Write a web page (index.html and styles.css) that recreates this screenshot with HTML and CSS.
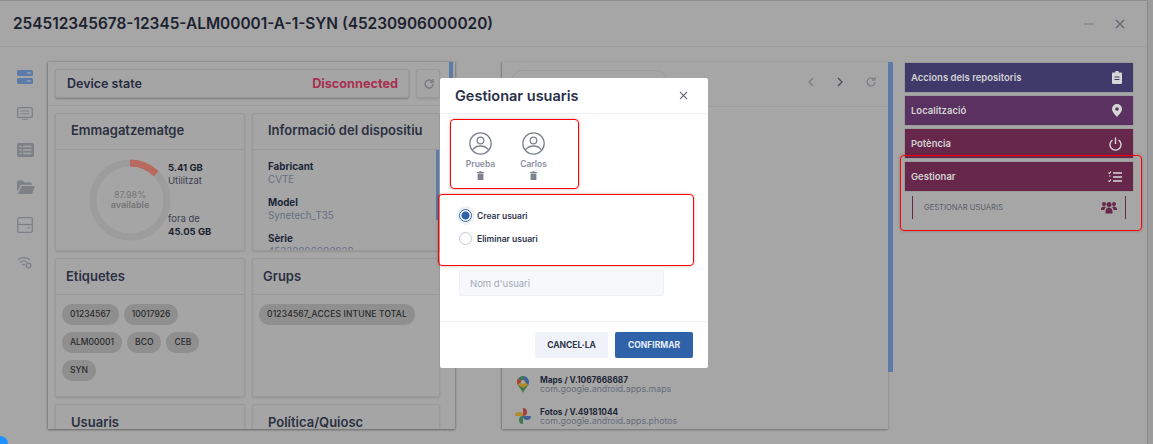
FILE: index.html
```html
<!DOCTYPE html>
<html lang="en">
<head>
    <meta charset="UTF-8">
    <title>Gestionar usuaris</title>
    <link rel="stylesheet" href="styles.css">
</head>
<body>
<div class="window">
    <header class="topbar">
        <h1>254512345678-12345-ALM00001-A-1-SYN (45230906000020)</h1>
        <div class="win-actions">
            <svg width="12" height="12" viewBox="0 0 12 12"><path d="M1 6h10" stroke="#7b7f8a" stroke-width="1.2"/></svg>
            <svg width="12" height="12" viewBox="0 0 12 12"><path d="M2 2l8 8M10 2l-8 8" stroke="#5f6470" stroke-width="1.2"/></svg>
        </div>
    </header>

    <div class="content">
        <aside class="sidebar">
            <svg width="16" height="14" viewBox="0 0 16 14"><rect width="16" height="6" rx="1.500" fill="#5b7ba8"/><rect y="8" width="16" height="6" rx="1.500" fill="#5b7ba8"/><path d="M10 3h4M10 11h4" stroke="#a9b6c8" stroke-width="1"/></svg>
            <svg width="16" height="13" viewBox="0 0 16 13"><rect x=".7" y=".7" width="14.600" height="9.600" rx="1.200" fill="none" stroke="#7d8087" stroke-width="1.300"/><path d="M3.500 4h9M3.500 6.800h9M5 12.300h6" stroke="#7d8087" stroke-width="1.100"/></svg>
            <svg width="17" height="14" viewBox="0 0 17 14"><rect width="17" height="14" rx="2" fill="#7d8087"/><path d="M2.500 3.500h2M6 3.500h8.500M2.500 7h2M6 7h8.500M2.500 10.500h2M6 10.500h8.500" stroke="#a6a6a6" stroke-width="1.400"/></svg>
            <svg width="18" height="14" viewBox="0 0 18 14"><path d="M0 2a1.500 1.500 0 0 1 1.500-1.500h4l2 2h6a1.500 1.500 0 0 1 1.500 1.500v.8H4L0 11.500z" fill="#7d8087"/><path d="M4.500 6H18l-3 8H1z" fill="#7d8087"/></svg>
            <svg width="16" height="16" viewBox="0 0 16 16"><rect x=".7" y=".7" width="14.600" height="14.600" rx="1.500" fill="none" stroke="#7d8087" stroke-width="1.300"/><path d="M1 7.500h14" stroke="#7d8087" stroke-width="1.300"/><path d="M10 11h3" stroke="#7d8087"/></svg>
            <svg width="15" height="13" viewBox="0 0 15 13"><path d="M1 4a9 9 0 0 1 12 0M3 6.500a6 6 0 0 1 7-.5M5 9a3 3 0 0 1 3-.5" fill="none" stroke="#7d8087" stroke-width="1.200"/><circle cx="11.500" cy="9.500" r="2.300" fill="none" stroke="#7d8087" stroke-width="1.300"/></svg>
        </aside>

        <section class="panel-left">
            <div class="panel-main">
                <div class="state-row">
                    <div class="card state-card">
                        <span class="state-title">Device state</span>
                        <span class="state-value">Disconnected</span>
                    </div>
                    <div class="card refresh-card">
                        <svg width="12" height="12" viewBox="0 0 24 24"><path d="M20 12a8 8 0 1 1-2.500-5.800M20 2v6h-6" fill="none" stroke="#74777e" stroke-width="2.500"/></svg>
                    </div>
                </div>
                <div class="card-grid">
                    <div class="card info-card">
                        <h3 class="card-head indented">Emmagatzematge</h3>
                        <div class="storage">
                            <div class="donut">
                                <svg width="82" height="82" viewBox="0 0 82 82">
                                    <circle cx="41" cy="41" r="37" fill="none" stroke="#9c9c9c" stroke-width="7"/>
                                    <path d="M41 4A37 37 0 0 1 67.200 14.800" fill="none" stroke="#b86a60" stroke-width="7"/>
                                </svg>
                                <div class="donut-label"><span>87.98%</span><b>available</b></div>
                            </div>
                            <div class="storage-text">
                                <div><b>5.41 GB</b><br>Utilitzat</div>
                                <div>fora de<br><b>45.05 GB</b></div>
                            </div>
                        </div>
                    </div>
                    <div class="card info-card">
                        <h3 class="card-head indented">Informació del dispositiu</h3>
                        <dl class="device-info">
                            <dt>Fabricant</dt><dd>CVTE</dd>
                            <dt>Model</dt><dd>Synetech_T35</dd>
                            <dt>Sèrie</dt><dd>45230906000020</dd>
                        </dl>
                        <div class="card-thumb"></div>
                    </div>
                    <div class="card tag-card">
                        <h3 class="card-head">Etiquetes</h3>
                        <div class="chips">
                            <span class="chip">01234567</span>
                            <span class="chip">10017926</span>
                            <span class="chip">ALM00001</span>
                            <span class="chip">BCO</span>
                            <span class="chip">CEB</span>
                            <span class="chip">SYN</span>
                        </div>
                    </div>
                    <div class="card tag-card">
                        <h3 class="card-head">Grups</h3>
                        <div class="chips">
                            <span class="chip chip-long">01234567_ACCES INTUNE TOTAL</span>
                        </div>
                    </div>
                    <div class="card last-card"><h3 class="card-head indented">Usuaris</h3></div>
                    <div class="card last-card"><h3 class="card-head indented">Política/Quiosc</h3></div>
                </div>
            </div>
            <div class="scroll-thumb"></div>
        </section>

        <div class="apps-rail">
            <svg width="11" height="9" viewBox="0 0 11 9" fill="#5b6478"><rect width="3" height="2.500"/><rect x="4" width="3" height="2.500"/><rect x="8" width="3" height="2.500"/><rect y="3.500" width="3" height="2.500"/><rect x="4" y="3.500" width="3" height="2.500"/><rect x="8" y="3.500" width="3" height="2.500"/><rect y="7" width="3" height="2"/><rect x="4" y="7" width="3" height="2"/><rect x="8" y="7" width="3" height="2"/></svg>
        </div>

        <section class="panel-apps">
            <div class="apps-bar">
                <div class="apps-search"></div>
                <div class="apps-nav">
                    <svg width="8" height="10" viewBox="0 0 8 10"><path d="M6 1L2 5l4 4" fill="none" stroke="#797c83" stroke-width="1.200"/></svg>
                    <svg width="8" height="10" viewBox="0 0 8 10"><path d="M2 1l4 4-4 4" fill="none" stroke="#4c505a" stroke-width="1.300"/></svg>
                    <svg width="12" height="12" viewBox="0 0 24 24"><path d="M20 12a8 8 0 1 1-2.500-5.800M20 2v6h-6" fill="none" stroke="#74777e" stroke-width="2.200"/></svg>
                </div>
            </div>
            <ul class="app-list">
                <li>
                    <svg class="app-icon" width="12" height="17" viewBox="0 0 12 17">
                        <path d="M6 0a6 6 0 0 1 6 6c0 1-.3 2-.8 2.900L6 5z" fill="#3f6293"/>
                        <path d="M6 0A6 6 0 0 0 1.300 2.200L6 6z" fill="#3c7a4b"/>
                        <path d="M1.300 2.200A6 6 0 0 0 .8 8.900L6 6z" fill="#a4413a"/>
                        <path d="M.8 8.900c1.400 2.800 4.200 4.600 5.200 8.100 1-3.500 3.800-5.300 5.200-8.100L6 6z" fill="#3c7a4b"/>
                        <path d="M.8 8.900L6 3.800l5.200 5.100L6 12z" fill="#b08a2c"/>
                        <circle cx="6" cy="6" r="2" fill="#a6a6a6"/>
                    </svg>
                    <div><b>Maps / V.1067668687</b><span>com.google.android.apps.maps</span></div>
                </li>
                <li>
                    <svg class="app-icon" width="16" height="16" viewBox="0 0 16 16">
                        <path d="M0 8h8a4 4 0 0 0-8 0z" fill="#b08a2c"/>
                        <path d="M0 8h8a4 4 0 0 0-8 0z" fill="#a4413a" transform="rotate(90 8 8)"/>
                        <path d="M0 8h8a4 4 0 0 0-8 0z" fill="#3f6293" transform="rotate(180 8 8)"/>
                        <path d="M0 8h8a4 4 0 0 0-8 0z" fill="#3c7a4b" transform="rotate(270 8 8)"/>
                    </svg>
                    <div><b>Fotos / V.49181044</b><span>com.google.android.apps.photos</span></div>
                </li>
            </ul>
        </section>
        <div class="apps-thumb"></div>

        <aside class="actions">
            <div class="action a-blue">Accions dels repositoris
                <svg width="10" height="13" viewBox="0 0 10 13"><path d="M1 1.500h2.200a1.800 1.800 0 0 1 3.600 0H9a1 1 0 0 1 1 1V12a1 1 0 0 1-1 1H1a1 1 0 0 1-1-1V2.500a1 1 0 0 1 1-1z" fill="#d6d6d6"/><path d="M2.500 6h5M2.500 8.500h5" stroke="#3f3a6a" stroke-width="1"/></svg>
            </div>
            <div class="action a-purple">Localització
                <svg width="10" height="13" viewBox="0 0 10 13"><path d="M5 0a5 5 0 0 1 5 5c0 3-3.500 6-5 8-1.500-2-5-5-5-8a5 5 0 0 1 5-5z" fill="#d6d6d6"/><circle cx="5" cy="5" r="1.800" fill="#5a3160"/></svg>
            </div>
            <div class="action a-wine">Potència
                <svg width="13" height="14" viewBox="0 0 13 14"><path d="M3.500 3a5.500 5.500 0 1 0 6 0M6.500 .5V7" fill="none" stroke="#d6d6d6" stroke-width="1.400"/></svg>
            </div>
            <div class="action a-wine">Gestionar
                <svg width="14" height="12" viewBox="0 0 14 12"><path d="M5 2h9M5 6h9M5 10h9" stroke="#d6d6d6" stroke-width="1.500"/><path d="M.5 1.500l1 1L3 .5M.5 9.500l1 1L3 8.500M1 5h1.500" fill="none" stroke="#d6d6d6" stroke-width="1.100"/></svg>
            </div>
            <div class="sub-action">GESTIONAR USUARIS
                <svg width="16" height="13" viewBox="0 0 16 13" fill="#66274b"><circle cx="3" cy="3" r="2"/><circle cx="13" cy="3" r="2"/><circle cx="8" cy="3.500" r="2.500"/><path d="M0 9a3 3 0 0 1 3-3.500c1 0 1.500.3 2 .8C4 7 3.500 8 3.500 9zM16 9a3 3 0 0 0-3-3.500c-1 0-1.500.3-2 .8 1 .7 1.500 1.700 1.500 2.700zM4.500 11c0-3 1.500-4.500 3.500-4.500s3.500 1.500 3.500 4.500v1.500h-7z"/></svg>
            </div>
        </aside>
    </div>
</div>

<div class="blue-dot"></div>

<div class="overlay">
    <div class="modal">
        <div class="modal-head">
            <h2>Gestionar usuaris</h2>
            <svg width="9" height="9" viewBox="0 0 9 9"><path d="M1 1l7 7M8 1L1 8" stroke="#6a6f7c" stroke-width="1.100"/></svg>
        </div>
        <div class="modal-body">
            <div class="users">
                <div class="user">
                    <svg width="23" height="23" viewBox="0 0 23 23"><circle cx="11.500" cy="11.500" r="10.700" fill="none" stroke="#7d8290" stroke-width="1.300"/><circle cx="11.500" cy="8.500" r="3.300" fill="none" stroke="#7d8290" stroke-width="1.300"/><path d="M3.500 18c2-3 5-4 8-4s6 1 8 4" fill="none" stroke="#7d8290" stroke-width="1.300"/></svg>
                    <b>Prueba</b>
                    <svg width="7" height="9" viewBox="0 0 7 9" fill="#7d8290"><path d="M0 1h2.300V.3h2.400V1H7v1H0zM.6 2.600h5.800V9H.6z"/></svg>
                </div>
                <div class="user">
                    <svg width="23" height="23" viewBox="0 0 23 23"><circle cx="11.500" cy="11.500" r="10.700" fill="none" stroke="#7d8290" stroke-width="1.300"/><circle cx="11.500" cy="8.500" r="3.300" fill="none" stroke="#7d8290" stroke-width="1.300"/><path d="M3.500 18c2-3 5-4 8-4s6 1 8 4" fill="none" stroke="#7d8290" stroke-width="1.300"/></svg>
                    <b>Carlos</b>
                    <svg width="7" height="9" viewBox="0 0 7 9" fill="#7d8290"><path d="M0 1h2.300V.3h2.400V1H7v1H0zM.6 2.600h5.800V9H.6z"/></svg>
                </div>
            </div>
            <div class="radios">
                <label class="radio checked"><span class="dot"></span>Crear usuari</label>
                <label class="radio"><span class="dot"></span>Eliminar usuari</label>
            </div>
            <input class="name-input" type="text" placeholder="Nom d'usuari">
        </div>
        <div class="modal-foot">
            <button class="btn-cancel">CANCEL·LA</button>
            <button class="btn-ok">CONFIRMAR</button>
        </div>
    </div>
</div>

<div class="mark mark-users"></div>
<div class="mark mark-radios"></div>
<div class="mark mark-manage"></div>
</body>
</html>
```

FILE: styles.css
```css
* { margin: 0; padding: 0; box-sizing: border-box; }
body {
    width: 1153px;
    height: 444px;
    overflow: hidden;
    background: #9b9b9b;
    font-family: Inter, 'Noto Sans', sans-serif;
    color: #262b3d;
}

/* window behind the dimmed overlay */
.window { width: 1148px; height: 444px; background: #a6a6a6; border-right: 1px solid #8a8a8a; border-top: 1px solid #8e8e8e; }
.topbar {
    height: 46px;
    display: flex;
    justify-content: space-between;
    align-items: center;
    padding: 0 21px 0 13px;
    border-bottom: 1px solid #9c9c9c;
}
.topbar h1 { font-size: 15.4px; font-weight: 600; color: #1d2230; }
.win-actions { display: flex; gap: 19px; }

.content { display: flex; height: 397px; padding-top: 15px; align-items: flex-start; }
.sidebar {
    width: 48px;
    padding: 8px 0 0 17px;
    display: flex;
    flex-direction: column;
    align-items: flex-start;
    gap: 23px;
}

.card { background: #a5a5a5; border: 1px solid #9a9a9a; border-radius: 2px; box-shadow: 0 1px 2px rgba(0,0,0,.12); }

.panel-left {
    width: 407px;
    height: 367px;
    display: flex;
    justify-content: space-between;
    box-shadow: -1px 0 2px rgba(0,0,0,.15), 0 1px 2px rgba(0,0,0,.3), 1px 0 2px rgba(0,0,0,.12);
    overflow: hidden;
}
.panel-main { width: 392px; padding-top: 7px; flex: none; }
.state-row { display: flex; gap: 7px; padding: 0 0 7px 7px; border-bottom: 1px solid #9c9c9c; }
.state-card {
    width: 354px;
    height: 29px;
    display: flex;
    justify-content: space-between;
    align-items: center;
    padding: 0 10px 0 11px;
    box-shadow: 0 1px 2px rgba(0,0,0,.25);
}
.state-title { font-size: 12.5px; font-weight: 600; }
.state-value { font-size: 12.7px; font-weight: 700; color: #a83050; }
.refresh-card { width: 24px; height: 29px; display: flex; align-items: center; padding-left: 6px; }

.card-grid { display: grid; grid-template-columns: 190px 188px; grid-template-rows: 138px 139px 60px; gap: 7px; margin: 7px 0 0 7px; }
.info-card, .tag-card, .last-card { overflow: hidden; position: relative; }
.card-head { height: 36px; font-size: 13px; font-weight: 600; padding: 8px 10px 0; border-bottom: 1px solid #999; color: #2b3042; }
.card-head.indented { padding-left: 15px; }
.tag-card .card-head, .last-card .card-head { padding-top: 9px; }

.storage { display: flex; gap: 0; padding: 9px 0 0 33px; }
.donut { position: relative; width: 82px; height: 82px; flex: none; margin-right: -3px; }
.donut-label {
    position: absolute;
    inset: 0;
    display: flex;
    flex-direction: column;
    justify-content: center;
    align-items: center;
    font-size: 9px;
    line-height: 10px;
    color: #757575;
}
.donut-label b { font-weight: 600; }
.storage-text { position: relative; font-size: 9.5px; line-height: 13px; color: #3c4050; display: flex; flex-direction: column; gap: 25px; padding-top: 2px; }
.storage-text b { color: #1f2433; font-weight: 700; }

.device-info { padding: 10px 15px; font-size: 9.8px; }
.device-info dt { font-weight: 700; line-height: 13px; color: #20253a; }
.device-info dd { line-height: 13px; color: #686e84; margin-bottom: 10px; }
.card-thumb { position: absolute; right: 0; top: 36px; width: 3px; height: 70px; background: #5c7ba6; }

.chips { display: flex; flex-wrap: wrap; gap: 7px 5px; padding: 9px 6px; }
.chip {
    background: #8f8f8f;
    border-radius: 10px;
    height: 21px;
    line-height: 21px;
    padding: 0 8px;
    font-size: 8.5px;
    font-weight: 500;
    color: #2a2a2a;
}
.chip-long { letter-spacing: .15px; }

.scroll-thumb { width: 4px; height: 300px; margin-right: 2px; background: #5c7ba6; flex: none; }

.apps-rail { width: 47px; padding: 9px 0 0 16px; flex: none; }

.panel-apps {
    width: 386px;
    height: 367px;
    flex: none;
    box-shadow: 0 1px 2px rgba(0,0,0,.3), -1px 0 1px rgba(0,0,0,.12);
    display: flex;
    flex-direction: column;
    justify-content: space-between;
}
.apps-bar { height: 45px; display: flex; justify-content: space-between; align-items: flex-start; padding: 8px 11px 0 9px; border-bottom: 1px solid #9c9c9c; }
.apps-search { width: 157px; height: 24px; border: 1px solid #9c9c9c; border-radius: 12px; }
.apps-nav { display: flex; gap: 21px; padding-top: 6px; align-items: center; }
.app-list { list-style: none; margin-bottom: -3px; }
.app-list li { display: flex; align-items: center; gap: 9px; height: 32px; padding-left: 13px; }
.app-icon { width: 16px; flex: none; }
.app-list b { display: block; font-size: 8.3px; line-height: 8px; font-weight: 700; color: #23283a; }
.app-list span { display: block; font-size: 8.8px; line-height: 9px; color: #686c7c; }

.apps-thumb { width: 5px; height: 310px; background: #5c7ba6; flex: none; }

.actions { width: 228px; margin-left: 12px; padding-top: 1px; display: flex; flex-direction: column; gap: 4px; flex: none; }
.action {
    height: 29px;
    display: flex;
    justify-content: space-between;
    align-items: center;
    padding: 0 11px 0 6px;
    font-size: 9.5px;
    font-weight: 600;
    color: #d2d2d2;
    box-shadow: 0 0 1px rgba(0,0,0,.4);
}
.a-blue { background: #3f3a6a; }
.a-purple { background: #5a3160; }
.a-wine { background: #66274b; }
.sub-action {
    height: 23px;
    margin: 1px 7px 0 7px;
    padding: 0 8px 0 11px;
    display: flex;
    justify-content: space-between;
    align-items: center;
    border-left: 1px solid #66274b;
    border-right: 1px solid #66274b;
    font-size: 7.6px;
    color: #5b5d66;
}

.blue-dot { position: absolute; left: -8px; top: 436px; width: 16px; height: 16px; border-radius: 50%; background: #1e90ff; }

/* modal */
.overlay { position: absolute; left: 440px; top: 78px; }
.modal { width: 268px; height: 290px; background: #fff; border-radius: 2px; display: flex; flex-direction: column; }
.modal-head {
    height: 36px;
    flex: none;
    display: flex;
    justify-content: space-between;
    align-items: center;
    padding: 0 20px 0 15px;
    border-bottom: 1px solid #eef0f4;
}
.modal-head h2 { font-size: 14.5px; font-weight: 600; color: #2a3048; }
.modal-body { flex: 1; padding: 18px 19px 0; }
.users { display: flex; gap: 20px; margin-left: 5px; }
.user { width: 33px; display: flex; flex-direction: column; align-items: center; }
.user b { font-size: 8.5px; font-weight: 600; color: #8b8f9e; margin-top: 3px; line-height: 12px; }
.user svg:last-child { margin-top: 1px; }
.radios { margin-top: 29px; display: flex; flex-direction: column; gap: 10px; }
.radio { display: flex; align-items: center; gap: 5px; height: 13px; font-size: 8.5px; font-weight: 600; color: #2f354a; }
.dot { width: 13px; height: 13px; border-radius: 50%; border: 1px solid #c3c9d6; background: #fff; flex: none; }
.radio.checked .dot { border-color: #2f62a8; background: radial-gradient(circle, #2f62a8 0 3.8px, #fff 4.3px); box-shadow: 0 0 0 3px #eef1f6; }
.name-input {
    display: block;
    width: 205px;
    height: 26px;
    margin-top: 25px;
    padding: 0 10px;
    background: #f6f8fc;
    border: 1px solid #eef0f6;
    border-radius: 2px;
    font: 9.5px Inter, sans-serif;
}
.name-input::placeholder { color: #a2a9b8; }
.modal-foot {
    height: 47px;
    flex: none;
    display: flex;
    justify-content: flex-end;
    align-items: flex-start;
    gap: 7px;
    padding: 10px 15px 0 0;
    border-top: 1px solid #eef0f4;
}
.modal-foot button { height: 26px; border: none; border-radius: 2px; font: 700 8.5px Inter, sans-serif; }
.btn-cancel { width: 73px; background: #eff2f8; color: #2f354a; }
.btn-ok { width: 78px; background: #2f62a8; color: #e8eef7; }

/* red marks drawn over the screenshot */
.mark { position: absolute; border: 1.5px solid #f00; border-radius: 4px; box-shadow: 0 0 3px rgba(120,0,0,.35); }
.mark-users { left: 450px; top: 119px; width: 129px; height: 70px; }
.mark-radios { left: 438px; top: 194px; width: 256px; height: 72px; }
.mark-manage { left: 900px; top: 155px; width: 242px; height: 76px; }
```
